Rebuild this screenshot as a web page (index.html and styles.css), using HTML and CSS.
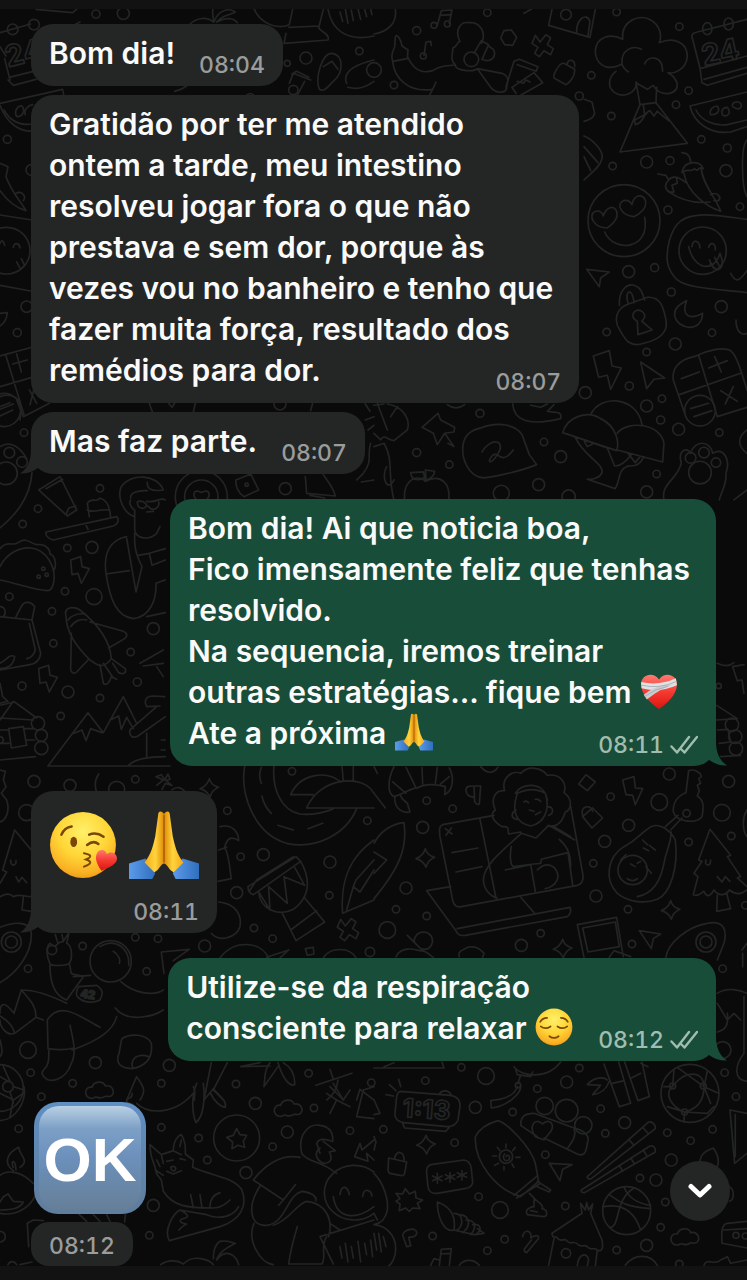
FILE: index.html
```html
<!DOCTYPE html>
<html lang="pt-BR">
<head>
<meta charset="utf-8">
<meta name="viewport" content="width=device-width, initial-scale=1">
<title>Conversa</title>
<link rel="stylesheet" href="styles.css">
</head>
<body>
<svg class="defs" aria-hidden="true">
  <defs>
    <radialGradient id="skin" cx=".5" cy=".3" r=".75"><stop offset="0" stop-color="#fff06a"/><stop offset=".5" stop-color="#ffd637"/><stop offset=".85" stop-color="#f9ae22"/><stop offset="1" stop-color="#e98f13"/></radialGradient>
    <linearGradient id="hand" x1="0" x2="1"><stop offset="0" stop-color="#f5a917"/><stop offset=".55" stop-color="#ffd43c"/><stop offset="1" stop-color="#e08a06"/></linearGradient>
    <linearGradient id="cuff" x1="0" x2="1"><stop offset="0" stop-color="#5b9bea"/><stop offset="1" stop-color="#2f6fbe"/></linearGradient>
    <linearGradient id="heart" x1="0" y1="0" x2="0" y2="1"><stop offset="0" stop-color="#ff7a70"/><stop offset=".5" stop-color="#f53a32"/><stop offset="1" stop-color="#d9150f"/></linearGradient>
    <linearGradient id="okface" x1="0" y1="0" x2="0" y2="1"><stop offset="0" stop-color="#b9d0e4"/><stop offset=".22" stop-color="#7c9fc6"/><stop offset=".5" stop-color="#6b90bb"/><stop offset="1" stop-color="#667f98"/></linearGradient>
    <linearGradient id="okrim" x1="0" y1="0" x2="0" y2="1"><stop offset="0" stop-color="#5f8fc4"/><stop offset="1" stop-color="#5f7d9c"/></linearGradient>
    <symbol id="pray" viewBox="0 0 72 72">
      <path d="M0 55 17 50 27 65 24 71H0z" fill="url(#cuff)"/>
      <path d="M72 55 55 50 45 65 48 71H72z" fill="url(#cuff)"/>
      <path id="palm" d="M36 4C33 0 30 1 30 5L27 27C25 36 23 45 16 54L26 64C31 62 32 56 36 55z" fill="url(#hand)"/>
      <use href="#palm" transform="matrix(-1 0 0 1 72 0)"/>
      <path d="M36 5V54" stroke="#a85d08" stroke-width="1.6"/>
    </symbol>
    <symbol id="kiss" viewBox="0 0 68 66">
      <circle cx="33" cy="33" r="32" fill="url(#skin)"/>
      <g fill="none" stroke="#7a4708" stroke-width="2.4" stroke-linecap="round">
        <path d="M12 23Q15 16 22 15M39 23Q46 20 53 25M37 33Q43 28 48 32"/>
        <path d="M34 41Q45 43 36 47Q45 50 34 54" stroke-width="2"/>
      </g>
      <ellipse cx="24" cy="30" rx="3.3" ry="5" fill="#7a4708"/>
      <path d="M51 58C45 50 44 43 48 39C52 36 56 39 56 42C59 39 65 40 66 45C67 52 58 55 51 58z" fill="url(#heart)"/>
    </symbol>
    <symbol id="calm" viewBox="0 0 68 66">
      <circle cx="34" cy="33" r="32" fill="url(#skin)"/>
      <path d="M10 24Q14 17 22 17M46 17Q54 17 58 24M11 32Q19 38 28 32M40 32Q49 38 57 32M26 49Q34 55 42 49" fill="none" stroke="#7a4708" stroke-width="3" stroke-linecap="round"/>
    </symbol>
    <symbol id="mend" viewBox="0 0 72 72">
      <path d="M36 70C22 60 2 44 2 23C2 6 24-2 36 14C48-2 70 6 70 23C70 44 50 60 36 70z" fill="url(#heart)"/>
      <path d="M2 19Q36 27 68 12L70 25Q35 40 3 31z" fill="#dfe2e4"/>
      <path d="M63 24Q40 30 13 52L7 43Q25 28 48 24z" fill="#c9cdd0"/>
      <path d="M3 25Q36 33 69 18M9 46Q30 31 54 27" fill="none" stroke="#a3a8ac" stroke-width="1.5"/>
    </symbol>
    <symbol id="ticks" viewBox="0 0 28 20">
      <path d="M1.500 11.500 7 17.500 19 2M14.500 17.500 27 2M11.500 14.500 14.500 17.500" fill="none" stroke="currentColor" stroke-width="2.4" stroke-linecap="round" stroke-linejoin="round"/>
    </symbol>
    <symbol id="tail" viewBox="0 0 20 24">
      <path d="M9 0C9 11 13 19 20 23.500C14 24 8 22 2 18L0 0z" fill="currentColor"/>
    </symbol>
    <path id="spark" d="M0-28Q5-8 28-2Q8 6 2 28Q-6 8-28 2Q-7-6 0-28z"/>
    <path id="cloud" d="M-38 20C-50 5-38-12-24-8C-18-28 10-28 16-12C36-16 46 4 36 16C28 24 20 16 14 20C0 30-10 18-16 22C-24 28-34 24-38 20z"/>
    <path id="bolt" d="M-26-30 4-40 8-10 30-4 6 40-4 10-22 14z"/>
    <path id="arrow" d="M-34-20 34-16 6-2-2 32z"/>
    <path id="cross" d="M-22-32-8-12 10-34 24-24 14-4 32 8 24 26 4 14-10 32-24 22-14 4-32-8z"/>
  </defs>
</svg>

<svg class="wallpaper" viewBox="0 0 747 1280" preserveAspectRatio="xMidYMin slice" aria-hidden="true">
  <g transform="scale(.3333)">
    <path d="M0 98 92 72M240 66 210 82M108 28 218 38 232 26M0 140 18 168M30 240 14 176M24 240 40 256 108 238M28 232 100 214M0 310 188 268 192 290M0 316C20 370 60 400 110 392M12 330C30 362 60 378 100 372M50 350C40 330 56 316 66 318C76 330 70 350 50 350zM76 344C70 330 84 316 98 314M0 490 24 500 18 530C36 580 60 600 78 632C50 624 20 600 0 572M48 580C66 570 80 590 70 602 M0 645 96 660M0 856 96 874M0 730C6 716 12 724 14 736M40 742C44 724 58 730 60 744M50 786 62 808 74 796 64 776M0 940 22 938C20 960 10 972 0 978M0 1068 96 1042M18 1068 72 1244M0 1160 104 1130M50 1062 64 1116M38 1092 82 1080M88 1170 110 1210M104 1160 90 1214M0 1228 40 1212M0 1190C40 1176 64 1200 64 1230L60 1260"/>
    <circle cx="38" cy="88" r="16"/><circle cx="102" cy="74" r="16"/><circle cx="288" cy="42" r="12"/><circle cx="370" cy="40" r="18"/><circle cx="22" cy="418" r="12"/><circle cx="94" cy="510" r="16"/><circle cx="20" cy="752" r="70"/><circle cx="80" cy="920" r="17"/><circle cx="52" cy="998" r="12"/>
    <text x="24" y="202" font-size="88" transform="rotate(-14 24 202)">24</text>
    <path d="M570 72C590 54 620 48 640 66C642 50 634 36 640 26M642 66C656 26 690 24 706 36C690 46 664 46 650 66C680 50 702 54 712 68M762 26C780 70 830 90 868 74L878 28M858 100 852 130 984 120C992 104 962 94 956 84L970 28M866 82 958 78M984 28C996 90 1040 126 1122 108M1020 36 1028 64M1036 26 1044 70M1054 30 1060 62M1074 26 1082 58M1094 28 1100 50M1112 26 1116 44M958 268C944 230 968 158 996 160C1034 166 1030 220 1000 244C984 258 974 278 958 268zM970 200 996 184 1014 208M1040 250C1024 210 1080 190 1122 180M1044 262C1070 270 1100 260 1122 244M868 250 880 220 932 240M876 222 890 214 926 232M890 290 914 244M524 274C544 270 552 264 560 258M740 286Q750 276 762 286"/>
    <circle cx="918" cy="174" r="18"/><circle cx="1078" cy="153" r="11"/><circle cx="862" cy="190" r="9"/><circle cx="880" cy="270" r="14"/>
    <path d="M448 1210 458 1238M506 1210 516 1222 524 1210M586 1210 580 1236M932 1232 938 1210M1096 1212 1110 1234"/><circle cx="840" cy="1212" r="18"/>
  </g>

  <g transform="translate(374 0) scale(.3333)">
    <path d="M64 28C70 70 40 96 0 102M190 76 202 32 234 30 226 70M198 46 232 44M150 166 156 126 170 124 172 136M450 40 474 26M524 76 534 28M524 76 648 112 664 28M608 98C606 60 636 34 648 64L642 108M64 110C70 100 80 118 84 138L102 150 100 176 56 184C48 160 60 150 62 140zM56 184C60 230 100 280 176 268L186 246M176 268 166 286M102 172C120 214 150 220 176 212C210 190 230 200 244 194C226 180 238 160 236 144C250 142 246 128 258 124C240 90 260 64 284 68C320 64 338 100 322 130M244 194C240 214 300 216 310 206L384 220C400 226 406 236 398 258 C400 280 370 284 350 262L310 206M300 160 322 122 344 134 324 178M324 178C350 190 370 170 358 148L344 138M396 260 420 184 436 178 492 200 486 214 430 194M414 262 480 218 506 248 440 286M414 262 426 280M430 244 448 250 456 240 468 246M540 224C550 200 560 188 570 190L602 208C604 230 586 248 576 254L540 234zM580 192C580 176 604 176 602 200"/>
    <path d="M390 92 412 90 428 112 416 136 392 134 380 114z"/><use href="#cross" x="506" y="138"/>
    <path d="M744 192C690 220 664 184 664 152C668 110 710 98 746 118C740 60 800 40 830 60C860 76 864 110 856 128C900 110 940 126 940 170C936 210 900 222 882 218C914 236 922 272 886 280C860 284 846 270 838 256L820 268 786 248C790 276 750 296 722 278C700 262 702 232 726 214M744 192C740 150 776 134 802 148M744 192C748 204 756 212 764 216M812 192C820 166 866 164 866 214M786 246 798 314 738 456 940 430 846 308 848 262M798 314 846 308M808 314 812 344 782 360 784 374C810 370 806 340 828 332L840 348 850 334M850 334 884 362"/>
    <path d="M956 118C950 104 956 98 970 96L1119 58M956 118 978 204 984 248 1000 256 1119 220M978 206 1119 168M990 238 1119 202M948 318 1119 276M948 318C960 370 1010 404 1070 396L1119 380M966 330C980 360 1020 380 1060 374L1119 360M1010 344C1004 330 1018 318 1030 318C1040 332 1030 346 1010 344zM1046 346C1040 330 1048 322 1060 322C1072 336 1064 352 1046 346zM1076 320C1072 306 1090 302 1100 310C1106 322 1096 334 1076 320z"/>
    <ellipse cx="1000" cy="86" rx="14" ry="18"/><ellipse cx="1064" cy="72" rx="14" ry="18"/>
    <text x="990" y="198" font-size="88" transform="rotate(-12 990 198)">24</text>
    <circle cx="128" cy="92" r="12"/><circle cx="60" cy="255" r="11"/><circle cx="0" cy="210" r="22"/><circle cx="340" cy="38" r="11"/><circle cx="180" cy="76" r="9"/><circle cx="220" cy="72" r="9"/><circle cx="148" cy="168" r="9"/><circle cx="292" cy="178" r="22"/><circle cx="576" cy="44" r="16"/><circle cx="728" cy="36" r="11"/><circle cx="652" cy="226" r="11"/><circle cx="916" cy="80" r="11"/><circle cx="944" cy="272" r="11"/><circle cx="906" cy="314" r="11"/><circle cx="712" cy="348" r="11"/><circle cx="616" cy="288" r="12"/><circle cx="982" cy="418" r="11"/><circle cx="1060" cy="444" r="12"/><circle cx="1056" cy="512" r="18"/><circle cx="888" cy="482" r="12"/><circle cx="818" cy="486" r="18"/><circle cx="716" cy="498" r="11"/><circle cx="882" cy="630" r="12"/><circle cx="1098" cy="620" r="11"/><circle cx="764" cy="815" r="18"/><circle cx="842" cy="803" r="12"/><circle cx="892" cy="876" r="12"/><circle cx="1042" cy="920" r="18"/><circle cx="1014" cy="998" r="11"/><circle cx="904" cy="1032" r="18"/><circle cx="818" cy="1056" r="11"/><circle cx="698" cy="996" r="11"/><circle cx="766" cy="1158" r="12"/><circle cx="634" cy="1178" r="18"/><circle cx="818" cy="1218" r="18"/><circle cx="864" cy="1196" r="11"/><circle cx="860" cy="1260" r="12"/><circle cx="914" cy="1288" r="18"/><circle cx="1036" cy="1298" r="11"/><circle cx="848" cy="1422" r="11"/><circle cx="818" cy="1476" r="18"/><circle cx="560" cy="1370" r="18"/><circle cx="510" cy="1326" r="11"/><circle cx="494" cy="1454" r="18"/><circle cx="318" cy="1240" r="12"/><circle cx="128" cy="1358" r="12"/><circle cx="226" cy="1394" r="11"/><circle cx="382" cy="1480" r="24"/><circle cx="584" cy="1490" r="20"/>
    <path d="M630 298 654 306 662 340C658 356 640 362 630 364M630 408C660 420 690 456 684 476C680 500 650 520 630 540M630 440 672 488M630 470 650 512"/>
    <circle cx="750" cy="662" r="108"/><path d="M692 696C720 760 830 750 812 652M700 684C660 684 640 646 664 634C680 630 686 642 688 648C696 622 716 616 726 630C736 650 720 670 700 684zM780 650C740 646 726 612 748 602C764 598 770 606 774 614C780 584 804 580 814 600C820 622 802 640 780 650z"/>
    <path d="M924 458C944 460 948 470 950 484M924 518C930 480 980 480 988 506C972 496 974 520 962 506C950 520 938 502 924 518zM930 520C940 580 1000 620 1040 634C1030 600 984 550 982 506M852 522 876 526 884 540C900 520 926 540 936 548M884 540C864 560 880 580 900 576L894 556 910 550 908 536M882 574C920 600 960 612 1008 606M1010 584C1028 574 1044 590 1034 602L1020 602M1119 420C1100 440 1102 560 1119 590"/>
    <path d="M1119 658C1060 650 1000 640 970 646C910 650 896 690 886 722C872 780 880 810 910 840C940 864 1010 866 1119 878M1070 820C1086 850 1096 844 1119 812M944 740C960 810 1020 820 1038 760M954 740C956 716 976 720 978 744M1004 742C1010 722 1026 730 1024 750M1006 780 1020 806M1022 772 1036 798M1038 760C1050 790 1046 808 1028 810L1008 792"/><circle cx="986" cy="752" r="71"/>
    <path d="M638 808 706 816 680 834 676 860zM736 916C734 870 760 850 780 856C804 864 806 884 812 900M762 910C750 870 776 860 780 908M764 912 820 892C860 890 868 920 876 960C884 1000 850 1020 810 1030C760 1046 750 1010 730 976C720 940 740 920 764 912zM790 964C764 950 782 924 800 932C824 946 806 960 804 964L834 990 792 1004z"/>
    <path d="M938 902C920 950 950 960 986 940C984 1000 910 990 902 946C900 920 924 910 938 902zM658 1068 706 1052 714 1098 742 1104 710 1168 700 1126 674 1132zM800 1086 872 1134 840 1138 818 1166zM1119 1000C1100 1010 1086 990 1086 960"/>
    <path d="M960 1070C1000 1050 1050 1040 1070 1052C1090 1070 1100 1110 1119 1170M960 1070C910 1080 894 1110 898 1140L932 1240M974 1066 1030 1250M916 1184 1100 1120M1030 1250 1119 1222M922 1136 976 1116M1004 1104 1060 1082M1022 1070 1042 1116M1040 1172 1090 1204M1078 1160 1054 1212M950 1226 1004 1210M960 1250 1014 1232"/><circle cx="978" cy="1232" r="46"/>
    <path d="M566 1298C580 1250 640 1230 680 1256C730 1280 736 1330 728 1352zM650 1244C680 1180 790 1190 804 1274M730 1300C760 1260 860 1270 870 1330L866 1386 730 1350M604 1312C630 1370 690 1390 684 1418C680 1430 660 1440 640 1438L724 1466C740 1440 730 1410 762 1398C790 1400 800 1390 810 1370M606 1312 700 1344 722 1398C740 1400 760 1380 774 1362M630 1322 640 1340 656 1332M762 1360 784 1388 798 1370"/>
    <path d="M320 1284C380 1260 430 1280 444 1304L466 1364 488 1394C450 1410 370 1430 330 1434C280 1430 260 1370 268 1330C276 1296 300 1290 320 1284zM324 1356C350 1310 400 1320 370 1364C350 1396 336 1388 356 1366C374 1350 380 1400 418 1350M144 1282 192 1240 200 1260 242 1282 240 1296 212 1300 190 1334 178 1300zM212 1300 240 1340 222 1330M416 1212C420 1260 460 1280 560 1256C566 1230 540 1240 520 1234L540 1214M470 1216 500 1222 520 1212M220 1214Q246 1234 272 1214"/>
    <path d="M870 1500C860 1450 910 1440 922 1390C910 1350 940 1340 950 1360C960 1320 1010 1320 1016 1360C1050 1340 1070 1380 1056 1420C1060 1450 1040 1480 1036 1500"/><circle cx="978" cy="1418" r="34"/><circle cx="950" cy="1374" r="16"/><circle cx="990" cy="1358" r="16"/><circle cx="1026" cy="1388" r="14"/>
    <path d="M92 1500C86 1440 130 1420 154 1444C200 1420 230 1450 224 1500M154 1440 148 1416 110 1418C112 1440 130 1444 148 1434M156 1440 154 1410 182 1414C180 1430 170 1436 156 1440M0 1216 30 1212M40 1212C90 1220 110 1260 100 1290L60 1322C40 1320 30 1300 20 1320L0 1300M10 1210 40 1290M70 1220 50 1250M0 1340 30 1330C60 1380 40 1430 60 1500M38 1400C20 1430 40 1480 60 1440M1119 1470 1080 1500M1119 1290C1090 1310 1090 1340 1119 1360"/>
  </g>

  <g transform="translate(0 400) scale(.3333)">
    <circle cx="12" cy="30" r="50"/><path d="M0 48 38 30M50 0 70 50 148 10M0 20 30 8M1096 60 1122 50M1104 90 1122 76M1112 130C1100 170 1120 180 1090 220L1070 240M1084 246 1122 240"/>
    <circle cx="72" cy="98" r="11"/><circle cx="28" cy="158" r="16"/><circle cx="66" cy="186" r="16"/><circle cx="18" cy="220" r="34"/><circle cx="300" cy="265" r="11"/><circle cx="114" cy="326" r="11"/><circle cx="68" cy="372" r="11"/><circle cx="202" cy="444" r="11"/><circle cx="276" cy="442" r="18"/><circle cx="195" cy="574" r="11"/><circle cx="282" cy="590" r="24"/><circle cx="28" cy="590" r="11"/><circle cx="156" cy="634" r="11"/><circle cx="160" cy="730" r="11"/><circle cx="392" cy="756" r="11"/><circle cx="460" cy="686" r="18"/><circle cx="412" cy="846" r="12"/><circle cx="66" cy="858" r="12"/><circle cx="204" cy="876" r="18"/><circle cx="300" cy="894" r="11"/><circle cx="182" cy="948" r="11"/><circle cx="856" cy="266" r="18"/><circle cx="740" cy="254" r="5"/>
    <path d="M0 140C30 120 60 140 80 176M96 218C90 300 40 350 0 384M116 270 180 230 230 330 202 348zM138 266 188 238M200 340 206 324 228 318M268 350 262 310C274 290 290 310 300 294C320 300 330 320 332 352M262 330C280 340 300 326 326 330M138 396 350 350C360 360 352 374 340 378L160 420C144 416 136 406 138 396zM256 370 264 388"/>
    <path d="M404 350C370 340 350 290 364 260C390 220 470 220 490 270C450 276 440 264 442 246M442 272C410 270 390 280 392 294M496 300C480 290 470 310 440 304M392 300C384 310 396 326 404 330V390C410 420 450 420 470 400L480 380M412 306C420 300 440 306 440 318C430 330 412 326 412 306zM444 318C460 340 480 320 476 306M440 336 460 334M380 410C330 420 310 460 318 520C330 600 350 650 400 656C450 650 470 600 468 550L495 540M380 416 408 576 426 500C400 450 404 420 404 400M318 522 388 512M414 466 448 460 456 496 496 480M448 460 496 446M440 650 496 638"/>
    <circle cx="604" cy="290" r="78"/><circle cx="604" cy="290" r="50"/><path d="M604 310C570 290 580 262 604 278C630 262 640 290 604 310M708 240 752 222 776 270 732 290C716 280 706 260 708 240zM916 230 920 280 1006 288C1000 260 980 240 970 224M930 286 974 294"/>
    <path d="M0 446C20 420 40 440 54 428C80 410 90 430 110 434C140 430 150 450 150 462C170 470 168 500 162 510M0 500C20 460 60 440 94 444C140 450 166 500 162 540C160 560 154 572 142 572C100 570 50 550 0 540"/><circle cx="130" cy="506" r="5"/><circle cx="116" cy="530" r="5"/><circle cx="140" cy="524" r="5"/>
    <use href="#bolt" x="238" y="510"/><use href="#bolt" x="142" y="836"/>
    <path d="M198 650C190 620 220 618 240 630C290 670 330 720 334 776C310 810 290 796 270 780C230 740 200 700 198 650zM204 660C220 640 240 640 256 642M212 680C226 660 246 656 260 660M270 666 370 694C384 700 382 710 374 716L326 744M214 700 212 810C216 820 224 822 230 816L264 780M334 776 376 806C380 820 370 824 356 818L338 790M300 794 310 850C320 860 330 844 334 830L350 838M310 790 340 834"/>
    <path d="M0 650 96 660 122 760C120 780 110 790 90 794L0 810M96 660 104 620C90 600 70 606 64 620L48 650M88 670 106 750C100 770 90 774 80 776M0 790C20 780 30 760 44 770C40 800 20 804 0 806M0 620C16 620 20 640 10 650M420 790 490 750M430 798 490 790M470 800 490 830"/>
    <path d="M0 916 44 906 110 954M0 960 40 904M0 954 100 960M0 990 26 990M74 986 100 986M0 1030 28 1030M76 1020 104 1020M0 1080 106 1070M26 986 70 980 80 1036 34 1044zM0 850 8 890 24 904 0 910"/><circle cx="114" cy="970" r="20"/><circle cx="124" cy="1006" r="18"/><circle cx="124" cy="1044" r="20"/><circle cx="0" cy="1020" r="10"/>
    <path d="M144 1098 264 938 310 998 370 890 410 970M144 1098H510M216 1002 246 990 258 1022 272 986 306 998M330 960 356 948 364 988 380 952 400 986M384 1098C400 1080 430 1070 496 1070M440 920C430 900 440 888 460 888L494 890M440 920 480 918M470 920 390 990C386 1010 400 1016 414 1008L496 950M440 1000V1070M484 1020H496M484 1050H496"/>
  </g>

  <g transform="translate(374 660) scale(.3333)">
    <path d="M0 320 10 340M1030 10C1050 20 1066 20 1080 8M1076 20 1110 14M1076 20 1090 62 1104 60 1110 100M1028 136 1090 176 1028 180M1030 210 1062 208 1070 246 1036 250M1040 290 1100 286"/><circle cx="1074" cy="194" r="20"/><circle cx="1084" cy="230" r="20"/><circle cx="1086" cy="266" r="20"/><circle cx="1034" cy="78" r="8"/>
    <path d="M60 320C40 360 40 400 60 410C90 400 120 380 130 384C150 370 190 372 214 380L212 404C240 390 240 350 226 324M96 322 126 384M144 322 146 372M190 322 184 370M56 366 96 400M62 410C60 450 90 460 108 456L100 430C90 420 84 420 78 404M226 350 200 372M320 320C340 344 360 340 372 322M0 400 34 444M276 390C276 376 290 378 320 378L316 432C310 436 304 430 302 424L300 378M300 412C280 410 276 400 276 390"/>
    <path d="M404 522C400 510 410 498 384 500C350 480 350 460 364 450C350 420 360 390 392 392C380 350 420 330 440 340C470 310 510 330 520 346C560 340 580 370 570 398C600 420 590 450 574 456C560 500 540 500 520 498M424 400C440 370 510 360 520 420M430 400C410 460 430 490 470 498C510 490 530 450 514 400C480 380 450 390 430 400zM426 450C410 460 410 476 430 478M520 440C540 440 540 460 524 466M450 426C456 420 460 426 464 428M484 418C490 416 496 420 500 424M466 450 480 454M484 464 500 456M442 520 486 534 524 496M442 520C400 560 330 610 328 660C330 690 350 710 370 714M404 522 440 516M524 496 602 540M540 500 590 530M412 560C406 590 410 620 420 620L480 612 500 610M394 630 470 614 484 694M500 610 502 598 582 578 596 674M490 630C520 600 550 620 552 650C550 670 530 684 514 686M556 538C580 560 590 580 590 620"/>
    <path d="M360 466 206 494C194 500 196 510 198 530L236 720C240 740 250 742 262 740L610 676C624 672 630 660 626 640L590 440M318 478 366 714M158 692 230 680M158 692 246 812C250 824 260 828 274 826L580 770C590 764 592 750 588 742L250 806M440 712 484 762M234 578 312 564M246 636 324 620M214 506 234 522M232 504 216 526"/>
    <path d="M636 344 664 366 640 392 614 372zM626 470 654 504 686 474 656 444zM626 466C616 440 650 430 656 454M746 360 780 350 784 384 806 386 784 434 776 406 756 404z"/>
    <path d="M944 332C960 326 980 336 982 350L974 356 980 370 970 376 976 392 970 408C990 420 990 440 984 470C970 490 910 490 898 456C896 420 920 404 936 398zM924 474 890 510M912 466 874 500M820 508C850 480 890 510 904 540C914 620 890 700 850 718C810 734 760 724 730 700C690 660 700 590 750 560C790 540 800 520 820 508zM892 516C890 560 876 570 870 610C860 660 840 700 790 710M806 540 820 554M808 564 824 572M826 556 844 570M740 600 756 584M816 620 832 640M760 656Q776 668 790 656M770 612 784 620M790 610 800 604"/><circle cx="776" cy="630" r="44"/><circle cx="938" cy="460" r="11"/>
    <path d="M1008 508 1070 586 1060 590 1100 650 1090 654 1119 680M1008 508 974 600 984 604 960 640 972 650 958 704C970 712 980 700 990 694C1000 716 1010 706 1020 690C1040 716 1060 700 1066 690C1084 704 1100 706 1119 690M1030 706 1028 754 1070 746 1058 700M996 600C990 620 1010 620 1010 600M1030 650 1044 666 1054 650 1068 664M1119 450C1100 480 1110 520 1119 530"/>
    <use href="#spark" x="154" y="594"/><use href="#spark" x="890" y="750"/><use href="#spark" x="566" y="866"/>
    <path d="M0 550C20 510 60 490 90 488C100 560 80 620 0 716M0 640 38 600 0 576M610 794 728 772 748 890M610 794 630 892M626 804 724 786 736 860 642 876zM706 892 720 872 770 890M796 812 860 822 838 836 832 866zM876 892C880 850 940 800 1000 790C1050 780 1060 810 1050 850L1030 900M66 890C80 860 120 866 136 872C160 870 170 890 178 892M100 826 140 866C180 880 190 820 150 816C130 816 120 830 120 846M256 890C250 870 270 870 280 862C310 856 320 870 330 880L326 892M1104 870 1119 850M1106 880V920"/><circle cx="996" cy="846" r="30"/><circle cx="996" cy="846" r="18"/>
    <circle cx="158" cy="422" r="11"/><circle cx="236" cy="446" r="11"/><circle cx="146" cy="502" r="18"/><circle cx="96" cy="684" r="18"/><circle cx="66" cy="748" r="11"/><circle cx="158" cy="768" r="11"/><circle cx="40" cy="810" r="25"/><circle cx="442" cy="856" r="18"/><circle cx="500" cy="820" r="11"/><circle cx="710" cy="410" r="11"/><circle cx="856" cy="426" r="25"/><circle cx="886" cy="342" r="18"/><circle cx="1064" cy="364" r="18"/><circle cx="1044" cy="458" r="25"/><circle cx="764" cy="496" r="18"/><circle cx="692" cy="544" r="18"/><circle cx="658" cy="610" r="11"/><circle cx="666" cy="708" r="18"/><circle cx="762" cy="748" r="11"/><circle cx="774" cy="852" r="11"/><circle cx="944" cy="546" r="11"/><circle cx="1072" cy="528" r="11"/><circle cx="1114" cy="736" r="11"/><circle cx="1046" cy="926" r="11"/>
  </g>

  <g transform="translate(0 760) scale(.3333)">
    <circle cx="102" cy="64" r="18"/><circle cx="210" cy="76" r="18"/><circle cx="350" cy="88" r="24"/><circle cx="406" cy="58" r="11"/><circle cx="80" cy="158" r="24"/><circle cx="682" cy="152" r="11"/><circle cx="876" cy="34" r="11"/><circle cx="1102" cy="182" r="11"/><circle cx="790" cy="284" r="18"/><circle cx="722" cy="290" r="11"/><circle cx="990" cy="306" r="18"/><circle cx="710" cy="398" r="18"/><circle cx="988" cy="406" r="11"/><circle cx="762" cy="504" r="11"/><circle cx="818" cy="536" r="11"/><circle cx="614" cy="558" r="18"/><circle cx="474" cy="536" r="11"/><circle cx="406" cy="532" r="11"/><circle cx="248" cy="558" r="11"/><circle cx="84" cy="626" r="11"/><circle cx="440" cy="634" r="11"/><circle cx="84" cy="870" r="25"/><circle cx="92" cy="938" r="11"/><circle cx="286" cy="908" r="18"/><circle cx="218" cy="970" r="11"/><circle cx="484" cy="970" r="11"/><circle cx="508" cy="916" r="18"/><circle cx="708" cy="972" r="11"/><circle cx="926" cy="940" r="11"/><circle cx="1114" cy="968" r="11"/><circle cx="1110" cy="576" r="14"/>
    <path d="M0 30 16 34 10 60 18 80 4 100 20 120C30 150 20 180 0 186M296 42C284 60 284 80 290 96M470 76 490 60 468 50 484 44 494 60 504 42 510 58 498 62 516 76 496 70 486 88M516 90C530 76 546 84 554 94"/><use href="#spark" x="628" y="84"/>
    <path d="M734 18C720 100 760 220 860 250C950 270 1040 220 1070 146M822 18C816 80 840 150 900 162C940 166 980 156 1000 146M872 104C900 40 980 30 1022 66M872 104H940M920 144C960 50 1090 40 1122 100M920 144H1122M1026 18 1030 64M1060 18V62M784 22C776 40 780 60 784 70M786 108C790 130 800 146 814 160M834 196 880 210M924 206 968 190"/>
    <path d="M660 200C700 190 716 220 716 242C690 224 680 240 674 262C690 290 690 340 694 356L654 364M680 262 656 270M656 426C710 430 726 470 720 500C710 530 660 550 634 520"/>
    <path d="M744 380 888 290 902 304 760 404C748 400 744 390 744 380zM748 394 770 360 880 290M776 396C780 450 840 470 880 448C920 420 940 370 902 304M776 396 810 450 806 380 862 430 852 350 914 376 884 322M848 462 888 542 974 486 914 414M872 510 950 452M1122 240C1050 290 1020 360 1028 460L1122 420M1040 450 1060 380 1080 396 1122 330M1060 380 1068 360 1122 300"/><use href="#cross" x="1044" y="510"/>
    <path d="M8 330 44 210 94 270M8 330 20 336 0 370M0 410C20 400 30 400 40 410C60 400 70 410 94 410M70 410 66 450 94 454M32 300C30 320 50 320 48 302M48 350 56 366 66 352 80 368M0 502C40 486 90 480 94 520C96 580 50 640 0 668"/><circle cx="34" cy="546" r="30"/><circle cx="34" cy="546" r="18"/>
    <path d="M150 612C140 590 136 560 150 550C160 560 170 560 174 550L166 524M174 550 190 544 206 520M206 524 200 550C220 560 216 600 208 610M186 524 190 544M150 612C160 620 200 616 208 610M150 616C150 680 170 710 200 720L250 650C230 640 210 650 212 630L208 610"/><circle cx="156" cy="570" r="14"/><circle cx="332" cy="604" r="62"/><path d="M300 560C350 530 390 570 386 616M340 574C356 584 362 600 358 610M220 650 272 646M362 664C400 700 460 710 490 690M346 744C380 790 460 770 490 750M350 770C340 810 300 840 216 870M210 796C220 840 230 880 214 910C200 960 140 980 126 940C130 920 150 930 146 870M144 866C170 870 200 870 222 864M142 780C180 720 240 770 300 802M142 780 144 866M200 730C140 700 90 690 64 690L42 760C10 720 0 730 0 760M64 690C90 720 110 740 108 772L130 780M0 768C20 780 40 800 44 820L108 772M44 820C20 830 0 800 0 780M236 680 290 676C310 690 310 700 300 720C280 730 250 730 232 710C226 700 230 690 236 680zM484 576 568 568 520 602M484 576 492 640M660 594C700 540 780 540 806 594M800 592 866 570 840 594M970 594C990 560 1050 560 1068 594M916 566 940 562 942 582 922 586z"/>
    <text x="240" y="712" font-size="34" transform="rotate(8 240 712)">42</text>
    <path d="M366 836C390 820 440 820 454 850C460 900 430 920 396 926C360 924 350 910 354 890C362 870 360 850 366 836zM398 924C390 890 420 880 446 890M0 840C10 880 6 880 0 890"/>
    <circle cx="0" cy="984" r="70"/><circle cx="24" cy="980" r="16"/><path d="M0 950 24 964M40 980 72 990M30 996 40 1030M10 920 30 964"/><use href="#cloud" x="300" y="990"/>
    <path d="M410 950C430 980 440 990 420 1020M410 950C396 980 390 1000 380 1020M580 980C590 1000 580 1010 584 1020M634 908 612 1020M682 908 640 990 670 1020M722 920 780 908M722 920 810 918M810 908C790 930 796 960 792 980L834 920M834 908C850 960 870 980 884 974C886 940 870 920 850 908M948 976 1056 940M990 928 1000 958M1014 960C1010 1000 990 1010 980 1020M990 980 1030 1020M1070 1020 1080 988 1122 1020"/>
  </g>

  <g transform="translate(374 940) scale(.3333)">
    <path d="M1030 160C1060 140 1100 150 1119 160M1030 190 1060 240 1080 220 1100 240M1060 220C1066 260 1050 270 1030 276M1110 170V340C1080 380 1080 420 1119 424M0 384H210L204 366M30 380 60 368M420 380C440 410 520 420 560 366M424 384 430 404 470 410 476 396M440 406 432 430M430 440C420 470 380 480 350 482L352 504C400 500 440 460 440 440M640 434C660 410 690 410 700 420M640 434 680 436 656 464C690 460 700 440 706 424M690 372 736 500 770 490 734 366M716 430 750 422M752 366 792 482 826 470 804 366M768 416 800 400M800 370 822 380"/><circle cx="432" cy="436" r="8"/><circle cx="1046" cy="330" r="25"/>
    <path d="M80 454 230 466C250 470 260 480 258 500L252 540C246 556 236 560 220 560L90 548C66 544 60 530 64 510L68 470C70 460 76 454 80 454zM86 550 92 564 216 574 226 562M196 462C204 448 226 450 232 466M36 464 58 468M46 434 66 452M74 418 80 440M0 480 18 520 0 524"/>
    <text x="84" y="530" font-size="78" transform="rotate(4 84 530)">1:13</text>
    <use href="#spark" x="156" y="614"/>
    <path d="M44 654 98 666 92 700C90 708 84 708 78 706L48 700C40 696 42 690 44 654zM62 656C64 630 92 630 90 664M170 674 270 660C284 662 290 670 292 686L296 728C294 740 286 744 272 746L190 760C170 762 164 754 162 740L158 700C156 684 160 678 170 674zM0 590 6 606 0 630M0 700C30 730 44 780 40 810C34 840 20 850 0 854C50 860 70 900 64 940 60 960 50 975 44 978M0 820 10 840M0 880 8 930M14 880 22 936M28 890 36 920"/>
    <path d="M304 590C320 560 350 548 372 542C400 550 470 620 484 670L494 724 440 770C370 750 300 670 304 590zM420 766 490 708M428 774 500 730M490 724 530 750 526 756 490 740M466 760 482 776"/><circle cx="396" cy="650" r="20"/><path d="M396 650C400 640 412 650 404 660C390 668 384 650 392 642M396 612V624M370 622 378 632M356 648H368M362 676 374 670M390 690V680M420 682 414 672M438 652H426M424 622 416 632"/>
    <path d="M440 556C440 530 450 520 480 520L600 564C630 570 650 590 640 610C636 640 630 650 610 642L510 594M440 556 490 590M600 564C610 590 590 610 580 626M484 590C464 560 480 530 506 552C530 530 548 560 524 582L510 600z"/><circle cx="512" cy="498" r="26"/><circle cx="578" cy="512" r="34"/><circle cx="628" cy="556" r="26"/>
    <path d="M640 710 824 546C836 544 846 556 844 566L652 716C644 718 640 716 640 710zM764 598 778 614M806 562 822 580M622 750 828 618C840 616 846 624 844 636L632 758C624 758 620 756 622 750zM736 676 746 694M770 654 782 672M808 630 820 650"/>
    <circle cx="948" cy="460" r="87"/><path d="M896 440C930 390 990 390 990 440C990 500 950 510 932 516C890 500 870 460 896 440zM870 440 896 440 900 390M910 382 990 440 1034 460M990 440 1000 394M932 516 930 544M932 516 1000 520 1020 500M880 500 932 516M990 440 1010 490"/><circle cx="896" cy="438" r="9"/><circle cx="988" cy="438" r="9"/><circle cx="932" cy="516" r="9"/>
    <path d="M1068 510 1119 520M1068 510 1082 670 1119 640M1084 524V650M978 662C980 640 1000 630 1018 624C1036 650 1034 670 1030 680M1066 740C1084 750 1080 780 1066 784"/>
    <circle cx="758" cy="812" r="72"/><path d="M706 764C740 790 760 800 830 806M688 800C740 790 780 810 800 870M780 744C720 780 740 860 708 862M750 740C760 770 790 790 830 796"/>
    <use href="#arrow" x="560" y="690"/><path d="M66 760 86 762 94 746 106 762 124 754 126 774 146 780 130 790 138 806 116 804 106 814 94 804 76 812 78 792 66 784 78 776z"/>
    <path d="M190 786C230 800 246 830 240 870C210 880 190 830 190 786zM240 820C270 820 270 860 246 872M260 824C290 830 290 860 266 878M276 840C304 840 310 860 290 884M296 854C320 850 326 870 306 884M310 866 330 880 300 884M240 870 300 884M86 886C90 866 130 860 128 880C124 896 110 890 104 892L110 918 98 920 86 886M446 890C450 866 476 870 470 894C490 880 500 890 490 900L458 938C450 936 450 930 452 926L472 900M460 824C450 810 470 800 480 800V776C500 790 510 800 504 806C524 810 520 830 508 830zM470 812 490 816"/>
    <path d="M534 880 624 820 620 790 634 810 638 788 644 810 656 792 650 820 684 900C690 930 680 936 670 930L664 978M534 880C536 900 546 886 550 894C560 910 570 890 580 904C590 916 600 900 610 912C624 926 630 910 640 920C650 934 660 920 670 930M540 896 524 976M610 976C614 940 640 936 644 960L640 978"/><circle cx="576" cy="940" r="14"/>
    <use href="#cloud" x="934" y="890"/><path d="M1119 844 1060 850C1044 854 1042 870 1044 910L1119 924M1050 870 1119 866M170 976 180 956 196 960M196 976 202 928 232 926 226 976M200 942 230 940M256 976C270 956 300 956 316 976M754 976C780 940 830 940 850 976M990 976C1000 950 1020 980 1040 960L1060 950 1070 970 1119 960"/><circle cx="1086" cy="886" r="9"/><circle cx="1114" cy="888" r="9"/>
    <circle cx="154" cy="422" r="11"/><circle cx="336" cy="408" r="25"/><circle cx="262" cy="382" r="11"/><circle cx="304" cy="502" r="18"/><circle cx="28" cy="568" r="11"/><circle cx="242" cy="608" r="11"/><circle cx="416" cy="516" r="11"/><circle cx="490" cy="446" r="11"/><circle cx="578" cy="426" r="18"/><circle cx="616" cy="384" r="11"/><circle cx="680" cy="506" r="11"/><circle cx="752" cy="548" r="18"/><circle cx="694" cy="580" r="11"/><circle cx="514" cy="644" r="11"/><circle cx="880" cy="578" r="11"/><circle cx="1016" cy="568" r="11"/><circle cx="950" cy="602" r="11"/><circle cx="892" cy="660" r="18"/><circle cx="846" cy="720" r="18"/><circle cx="798" cy="714" r="11"/><circle cx="874" cy="786" r="11"/><circle cx="860" cy="862" r="11"/><circle cx="818" cy="916" r="18"/><circle cx="728" cy="930" r="11"/><circle cx="574" cy="798" r="11"/><circle cx="378" cy="810" r="25"/><circle cx="314" cy="770" r="11"/><circle cx="176" cy="888" r="11"/><circle cx="392" cy="898" r="11"/><circle cx="340" cy="932" r="11"/><circle cx="1052" cy="398" r="11"/><circle cx="1086" cy="470" r="11"/><circle cx="916" cy="972" r="11"/>
    <path d="M190 700V730M176 708 204 722M204 708 176 722M228 698V726M214 704 242 718M242 704 214 718M264 692V720M250 698 278 712M278 698 250 712"/>
  </g>

  <g transform="translate(0 1080) scale(.3333)">
    <circle cx="124" cy="50" r="11"/><circle cx="56" cy="146" r="11"/><circle cx="484" cy="142" r="11"/><circle cx="596" cy="174" r="11"/><circle cx="622" cy="240" r="11"/><circle cx="738" cy="278" r="18"/><circle cx="818" cy="200" r="11"/><circle cx="862" cy="156" r="18"/><circle cx="766" cy="70" r="18"/><circle cx="942" cy="84" r="11"/><circle cx="1050" cy="152" r="11"/><circle cx="460" cy="376" r="18"/><circle cx="448" cy="466" r="11"/><circle cx="0" cy="470" r="16"/><circle cx="710" cy="174" r="69"/><path d="M1122 276A90 82 0 1 0 1122 400"/>
    <path d="M710 146 720 164 740 166 730 184 734 202 714 196 696 206 698 186 680 172 700 166zM0 122C50 120 80 60 72 20M0 40 40 60 70 40M40 60 30 110M396 40C400 60 376 50 380 66L400 74M410 70C440 100 520 110 580 40M590 10C570 60 580 110 588 128C610 110 616 60 610 10M612 60 640 26C660 50 680 60 676 82C660 80 640 60 632 40"/>
    <use href="#cloud" x="866" y="84"/>
    <path d="M40 272C10 250 20 220 56 202C60 230 90 240 60 262M40 262C30 240 46 236 48 270M0 286C20 270 60 270 100 310M0 400C50 410 90 380 104 350M0 366 10 350 24 342 40 364 70 366C60 384 40 390 0 390M82 430 100 420 130 422M82 430 86 500M236 402 260 424M280 404 300 424M320 404 330 424M376 404 374 426M24 554C30 540 44 544 50 554M60 554 96 546"/>
    <path d="M450 194 484 224 520 212C520 180 536 166 544 164C560 190 556 210 556 222L580 240 578 262C640 290 700 290 726 330C744 380 720 420 660 440L508 482C490 450 520 400 540 390L620 404C660 420 700 410 716 380M450 194C450 240 466 250 470 282L484 300 490 334C520 380 560 384 640 384C660 384 680 370 690 360M484 224 490 250M470 240 480 260M520 212 544 224M466 270 490 286M500 274 520 282 544 272M512 262C520 256 530 260 526 270C520 276 514 272 512 262zM540 200 544 180M500 244 520 240M540 236 556 240M572 344 580 384M600 344 606 384M660 338C640 344 630 360 630 380M540 390C560 400 570 410 556 414 530 420 540 430 560 432 540 440 540 450 536 450"/>
    <path d="M906 222C890 160 930 130 960 136C990 140 1000 160 998 184C980 180 960 170 950 190L960 220M970 184 1006 212 988 216C1000 240 990 250 970 250C950 240 940 220 960 204M906 222C930 250 960 240 1010 280M760 300C790 260 840 220 900 232M760 300 850 360 886 314M780 318C740 380 750 440 800 436C860 430 860 340 910 334C940 340 950 350 948 362M836 376 850 360M762 430C740 480 780 550 820 554M820 436C870 420 890 370 920 364C980 370 1000 420 986 470M892 440C880 480 870 520 866 552H966C980 530 960 500 980 470M960 470 1122 420M960 470 1000 552M1000 350C1010 420 1070 420 1122 380M1020 344C1024 310 1044 320 1048 344M1088 350C1090 320 1114 330 1116 348M990 430 1020 450M1020 500 1026 534M1036 490 1044 546M1054 500 1060 534M1074 484 1082 546M1094 490 1100 524M1112 480 1118 530"/>
    <path d="M482 554C500 540 530 538 550 552 580 520 630 540 640 554M640 536C640 500 650 490 660 484C690 480 700 490 706 490C690 500 660 510 650 540M650 540C680 500 710 530 716 554M1064 230 1080 190 1086 210 1122 180M1064 230 1104 244 1100 220 1122 240M1070 110 1090 30 1122 20M1070 110 1122 116M990 100 1010 60 980 40M1010 60 1050 80M1000 10 1030 60 1050 30"/>
  </g>
</svg>

<header class="edge edge-top"></header>

<main class="chat">
  <article class="bubble in row">
    <p class="text">Bom dia!</p>
    <time class="time">08:04</time>
  </article>

  <article class="bubble in stack">
    <p class="text">Gratidão por ter me atendido<br>ontem a tarde, meu intestino<br>resolveu jogar fora o que não<br>prestava e sem dor, porque às<br>vezes vou no banheiro e tenho que<br>fazer muita força, resultado dos<br>remédios para dor.</p>
    <time class="time">08:07</time>
  </article>

  <article class="bubble in row last">
    <p class="text">Mas faz parte.</p>
    <time class="time">08:07</time>
    <svg class="tail"><use href="#tail"/></svg>
  </article>

  <article class="bubble out stack last">
    <p class="text">Bom dia! Ai que noticia boa,<br>Fico imensamente feliz que tenhas<br>resolvido.<br>Na sequencia, iremos treinar<br>outras estratégias... fique bem <svg class="emoji" role="img" aria-label="❤️‍🩹"><use href="#mend"/></svg><br>Ate a próxima <svg class="emoji" role="img" aria-label="🙏"><use href="#pray"/></svg></p>
    <div class="meta"><time class="time">08:11</time><svg class="ticks" role="img" aria-label="Entregue"><use href="#ticks"/></svg></div>
    <svg class="tail"><use href="#tail"/></svg>
  </article>

  <article class="bubble in big last">
    <div class="faces">
      <svg class="face" role="img" aria-label="😘"><use href="#kiss"/></svg>
      <svg class="face" role="img" aria-label="🙏"><use href="#pray"/></svg>
    </div>
    <time class="time">08:11</time>
    <svg class="tail"><use href="#tail"/></svg>
  </article>

  <article class="bubble out row last">
    <p class="text">Utilize-se da respiração<br>consciente para relaxar <svg class="emoji" role="img" aria-label="😌"><use href="#calm"/></svg></p>
    <div class="meta"><time class="time">08:12</time><svg class="ticks" role="img" aria-label="Entregue"><use href="#ticks"/></svg></div>
    <svg class="tail"><use href="#tail"/></svg>
  </article>

  <article class="sticker">
    <svg class="ok" viewBox="0 0 112 112" role="img" aria-label="🆗">
      <rect width="112" height="112" rx="24" fill="url(#okrim)"/>
      <rect x="5" y="4" width="102" height="104" rx="20" fill="url(#okface)"/>
      <text x="56" y="79" text-anchor="middle">OK</text>
    </svg>
    <time class="time pill">08:12</time>
  </article>
</main>

<button class="jump" type="button" aria-label="Ir para o fim">
  <svg viewBox="0 0 24 16"><path d="M3 3.500 12 12 21 3.500" fill="none" stroke="#fff" stroke-width="5" stroke-linecap="round" stroke-linejoin="round"/></svg>
</button>

<footer class="edge edge-bottom"></footer>
</body>
</html>
```
FILE: styles.css
```css
* { box-sizing: border-box; }

body {
  position: relative;
  display: flex;
  flex-direction: column;
  min-height: 100vh;
  margin: 0;
  overflow-x: hidden;
  background: #0a0a0a;
  color: #fafafa;
  font-family: Inter, "Liberation Sans", sans-serif;
  font-size: 30px;
  font-weight: 600;
  line-height: 41px;
}

p { margin: 0; }

.defs { position: absolute; width: 0; height: 0; }

.wallpaper {
  position: absolute;
  inset: 0;
  width: 100%;
  height: 100%;
  fill: none;
  stroke: #232525;
  stroke-width: 5;
  stroke-linejoin: round;
  stroke-linecap: round;
}

.wallpaper text { font-family: Inter, sans-serif; font-weight: 700; }

.edge { position: relative; background: #121212; }
.edge-top { height: 9px; }
.edge-bottom { height: 14px; }

.chat {
  position: relative;
  flex: 1;
  display: flex;
  flex-direction: column;
  align-items: flex-start;
  gap: 9px;
  padding: 15px 31px 0;
}

.bubble {
  position: relative;
  padding: 9px 18px;
  border-radius: 22px;
}

.in { background: #242626; color: #242626; }
.out { align-self: flex-end; background: #184d39; color: #184d39; }
.last { margin-bottom: 16px; }

.text { margin-bottom: 3px; color: #fafafa; white-space: nowrap; }

.row { display: flex; align-items: flex-end; gap: 24px; }
.stack { display: grid; }
.stack > .text { grid-area: 1 / 1; padding-right: 8px; }
.stack > .time, .stack > .meta { grid-area: 1 / 1; place-self: end; }

.time {
  color: #9b9c9c;
  font-size: 23px;
  font-weight: 500;
  font-variant-numeric: tabular-nums;
  line-height: 24px;
}
.meta { display: flex; align-items: center; gap: 6px; color: #a0bdaf; }
.meta .time { color: inherit; }
.ticks { width: 28px; height: 20px; }

.tail {
  position: absolute;
  right: -11px;
  bottom: 0;
  width: 20px;
  height: 24px;
}
.in .tail { right: auto; left: -11px; transform: scaleX(-1); }

.emoji { width: 40px; height: 38px; vertical-align: -7px; }

.big { display: flex; flex-direction: column; align-items: flex-end; padding-top: 18px; }
.faces { display: flex; gap: 10px; margin-bottom: 19px; }
.face { width: 70px; height: 72px; }

.sticker {
  display: flex;
  flex-direction: column;
  align-items: flex-start;
  gap: 8px;
  margin-top: 16px;
}
.ok { width: 112px; height: 112px; margin: 0 0 0 3px; }
.ok text { fill: #fff; font: 700 62px "Liberation Sans", sans-serif; }
.pill { padding: 12px 18px 8px; border-radius: 18px; background: #242626; }

.jump {
  position: fixed;
  right: 17px;
  bottom: 59px;
  display: grid;
  place-items: center;
  width: 60px;
  height: 60px;
  padding: 0;
  border: 0;
  border-radius: 50%;
  background: #242626;
}
.jump svg { width: 24px; height: 16px; }
```
